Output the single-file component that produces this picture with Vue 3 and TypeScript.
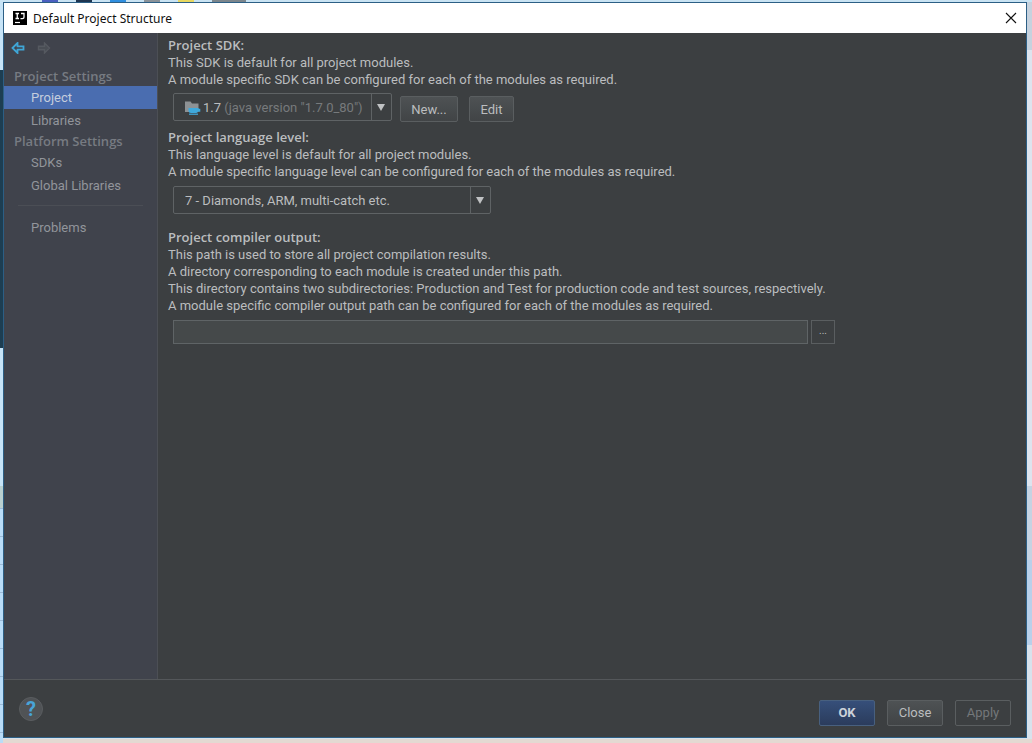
<script setup lang="ts">
import { ref } from 'vue'

interface NavItem { label: string }
interface NavGroup { title: string; items: NavItem[] }

const groups: NavGroup[] = [
  { title: 'Project Settings', items: [{ label: 'Project' }, { label: 'Libraries' }] },
  { title: 'Platform Settings', items: [{ label: 'SDKs' }, { label: 'Global Libraries' }] },
]
const selected = ref('Project')
const sdk = ref('1.7')
const level = ref('7')
const outputPath = ref('')
</script>

<template>
  <div class="desktop">
    <div class="strip" aria-hidden="true">
      <i class="mark navy"></i><i class="mark ink"></i><i class="mark blue"></i>
      <i class="mark grey"></i><i class="mark yellow"></i><i class="mark dark"></i>
    </div>
    <div class="window" role="dialog" aria-labelledby="title">
      <header class="titlebar">
        <svg class="logo" viewBox="0 0 14 14" aria-hidden="true">
          <rect width="14" height="14" fill="#000" />
          <path d="M2.500 2.500h3.500M4.250 2.500v5M2.500 7.500h3.500M8 2.500H11v3.700q0 1.400-1.700 1.400H7.500" fill="none" stroke="#fff" stroke-width="1.300" />
          <path d="M2 11.500h5" stroke="#fff" stroke-width="1.200" />
        </svg>
        <h1 id="title">Default Project Structure</h1>
        <button class="close" type="button" aria-label="Close window">
          <svg viewBox="0 0 12 12"><path d="M1 1l10 10M11 1L1 11" stroke="#111" stroke-width="1.1" /></svg>
        </button>
      </header>

      <div class="body">
        <nav class="sidebar">
          <div class="history">
            <button type="button" aria-label="Back">
              <svg viewBox="0 0 14 12"><path d="M1.5 6L6.5 1V4.3H12.5V7.7H6.5V11Z" fill="none" stroke="#3fa6d6" stroke-width="1.8" /></svg>
            </button>
            <button type="button" aria-label="Forward" disabled>
              <svg viewBox="0 0 14 12"><path d="M12.5 6L7.5 1V4.3H1.5V7.7H7.5V11Z" fill="#4a4e55" stroke="#555960" stroke-width="1.4" /></svg>
            </button>
          </div>
          <section v-for="group in groups" :key="group.title">
            <h2>{{ group.title }}</h2>
            <button
              v-for="item in group.items"
              :key="item.label"
              type="button"
              class="nav-item"
              :class="{ active: selected === item.label }"
              @click="selected = item.label"
            >{{ item.label }}</button>
          </section>
          <hr />
          <button type="button" class="nav-item">Problems</button>
        </nav>

        <main class="content">
          <section>
            <h3><label for="sdk">Project SDK:</label></h3>
            <p>This SDK is default for all project modules.</p>
            <p>A module specific SDK can be configured for each of the modules as required.</p>
            <div class="row sdk-row">
              <div class="combo sdk">
                <select id="sdk" v-model="sdk">
                  <option value="1.7">1.7 (java version "1.7.0_80")</option>
                </select>
                <span class="combo-value" aria-hidden="true">
                  <svg class="folder" viewBox="0 0 17 15">
                    <path d="M1 1.5h5.500l1.500 2h6.500V12H1z" fill="#8d9194" />
                    <path d="M4.500 8h10v.8h1.800v3h-2.300q-.7 1.200-2 1.200H7q-2.500 0-2.500-2.500z" fill="#3fa9dc" />
                    <path d="M5 14.200h9" stroke="#3fa9dc" stroke-width="1.200" />
                  </svg>
                  <span>1.7 <span class="muted">(java version "1.7.0_80")</span></span>
                </span>
                <span class="arrow" aria-hidden="true"></span>
              </div>
              <button class="btn new" type="button">New...</button>
              <button class="btn edit" type="button">Edit</button>
            </div>
          </section>

          <section class="level-section">
            <h3><label for="level">Project language level:</label></h3>
            <p>This language level is default for all project modules.</p>
            <p>A module specific language level can be configured for each of the modules as required.</p>
            <div class="row">
              <div class="combo level">
                <select id="level" v-model="level">
                  <option value="7">7 - Diamonds, ARM, multi-catch etc.</option>
                </select>
                <span class="arrow" aria-hidden="true"></span>
              </div>
            </div>
          </section>

          <section class="output-section">
            <h3><label for="output">Project compiler output:</label></h3>
            <p>This path is used to store all project compilation results.</p>
            <p>A directory corresponding to each module is created under this path.</p>
            <p>This directory contains two subdirectories: Production and Test for production code and test sources, respectively.</p>
            <p>A module specific compiler output path can be configured for each of the modules as required.</p>
            <div class="row path-row">
              <input id="output" v-model="outputPath" type="text" />
              <button class="browse" type="button" aria-label="Browse">...</button>
            </div>
          </section>
        </main>
      </div>

      <footer class="footer">
        <button class="help" type="button" aria-label="Help">?</button>
        <button class="btn primary" type="button">OK</button>
        <button class="btn" type="button">Close</button>
        <button class="btn" type="button" disabled>Apply</button>
      </footer>
    </div>
  </div>
</template>

<style>
body {
  margin: 0;
}
</style>

<style scoped>
* {
  box-sizing: border-box;
}
.desktop {
  position: relative;
  display: flex;
  min-height: 100vh;
  padding: 2px 5px 5px 3px;
  font: 13px/17px Roboto, "Noto Sans", sans-serif;
  color: #bbbdbf;
  background:
    linear-gradient(#1d3e52, #1d3e52) 0 70px / 3px 278px no-repeat,
    linear-gradient(#b9d0d0, #b9d0d0) 0 486px / 3px 22px no-repeat,
    repeating-linear-gradient(#9bb9d6 0 1px, #b9dcf7 1px 28px) 0 508px / 3px 235px no-repeat,
    linear-gradient(#c7e4f7, #c7e4f7) 0 0 / 3px 100% no-repeat,
    linear-gradient(#e3d9d2, #e3d9d2) 0 100% / 100% 4px no-repeat,
    linear-gradient(#c6d2de 0 50px, #dde4ee 50px 486px, #c5d3e2 486px 560px, #b9d0ea 560px 645px, #d8e2ec 645px);
}
.strip {
  position: absolute;
  inset: 0 0 auto;
  display: flex;
  gap: 18px;
  height: 2px;
  padding-left: 42px;
  background: #c9e3f3;
}
.mark { width: 16px; height: 2px; }
.navy { background: #4a5fc0; }
.ink { background: #1e3550; }
.blue { background: #2f8fe0; }
.grey { background: #8a9299; }
.yellow { background: #e8d860; }
.dark { width: 34px; background: #7b858c; }
.window {
  position: relative;
  display: flex;
  flex: 1;
  flex-direction: column;
  border: 1px solid #2c5f85;
  background: #3c3f41;
}
.titlebar {
  display: flex;
  align-items: center;
  height: 30px;
  padding: 0 9px;
  background: #fff;
  color: #111;
}
.logo { width: 14px; height: 14px; }
h1 {
  flex: 1;
  margin: 0 0 0 6px;
  font-family: "Noto Sans", "Open Sans", sans-serif;
  font-size: 12px;
  font-weight: 400;
}
button {
  margin: 0;
  padding: 0;
  border: 0;
  font: inherit;
  color: inherit;
  background: none;
}
.close { display: flex; }
.close svg { width: 12px; height: 12px; }
.body {
  display: flex;
  flex: 1;
}
.sidebar {
  width: 154px;
  border-right: 1px solid #4c4f55;
  background: #40434c;
  color: #92959b;
}
.history {
  display: flex;
  gap: 12px;
  padding: 9px 7px 13px;
}
.history button { display: flex; }
.history svg { width: 14px; height: 12px; }
h2,
h3 {
  margin: 0;
  font-family: "Open Sans", "Noto Sans", sans-serif;
  font-size: 13px;
  font-weight: 600;
}
h2 {
  padding-left: 10px;
  line-height: 19px;
  color: #777b82;
}
.nav-item {
  display: block;
  width: 100%;
  height: 23px;
  padding-left: 27px;
  text-align: left;
}
.nav-item.active {
  background: #4a6db0;
  color: #c5cddd;
}
hr {
  margin: 8px 14px 10px;
  border: 0;
  border-top: 1px solid #4b4e55;
}
.content {
  flex: 1;
  padding: 4px 10px;
}
p {
  margin: 0;
  white-space: nowrap;
}
.row {
  display: flex;
  align-items: center;
  padding: 6px 5px 0;
}
.sdk-row {
  align-items: flex-start;
  padding-top: 5px;
}
.combo {
  position: relative;
  height: 28px;
}
.combo select {
  appearance: none;
  width: 100%;
  height: 28px;
  padding: 0 24px 0 11px;
  border: 1px solid #5f6365;
  border-radius: 2px;
  font: inherit;
  color: #bbbdbf;
  background: #3c3f41;
}
.sdk { width: 219px; }
.sdk select { color: transparent; }
.level { width: 318px; }
.combo-value {
  position: absolute;
  inset: 0 20px 0 11px;
  display: flex;
  align-items: center;
  gap: 2px;
  white-space: nowrap;
  pointer-events: none;
}
.muted { color: #777a7c; }
.folder { width: 17px; height: 15px; }
.arrow {
  position: absolute;
  inset: 1px 1px 1px auto;
  display: flex;
  align-items: center;
  justify-content: center;
  width: 20px;
  padding-right: 2px;
  border-left: 1px solid #5f6365;
  pointer-events: none;
}
.arrow::before {
  content: "";
  border: 4px solid transparent;
  border-top: 7px solid #c0c2c4;
  border-bottom: 0;
}
.btn {
  width: 56px;
  height: 26px;
  border: 1px solid #5a5e60;
  border-radius: 2px;
  background: linear-gradient(#4e5254, #414446);
}
.new { width: 58px; margin: 3px 0 0 8px; }
.edit { width: 45px; margin: 3px 0 0 11px; }
.level-section { margin-top: 7px; }
.output-section { margin-top: 15px; }
.path-row {
  gap: 3px;
  width: 672px;
}
.path-row input {
  flex: 1;
  height: 24px;
  padding: 0 6px;
  border: 1px solid #5f6466;
  font: inherit;
  color: inherit;
  background: #45494a;
}
.browse {
  width: 24px;
  height: 24px;
  padding-bottom: 3px;
  border: 1px solid #5a5e60;
  font-size: 10px;
}
.footer {
  display: flex;
  gap: 12px;
  align-items: center;
  height: 58px;
  padding: 8px 15px 0;
  border-top: 1px solid #54575a;
}
.help {
  width: 24px;
  height: 24px;
  margin: -8px auto 0 0;
  border: 1px solid #5a5d60;
  border-radius: 50%;
  background: #505356;
  color: #48a4d8;
  font-size: 20px;
  line-height: 20px;
  font-weight: 700;
}
.primary {
  border-color: #48607f;
  background: linear-gradient(#364f7a, #2b3c5c);
  color: #ccd2da;
  font-weight: 700;
}
.btn:disabled {
  background: none;
  color: #74777a;
}
</style>
